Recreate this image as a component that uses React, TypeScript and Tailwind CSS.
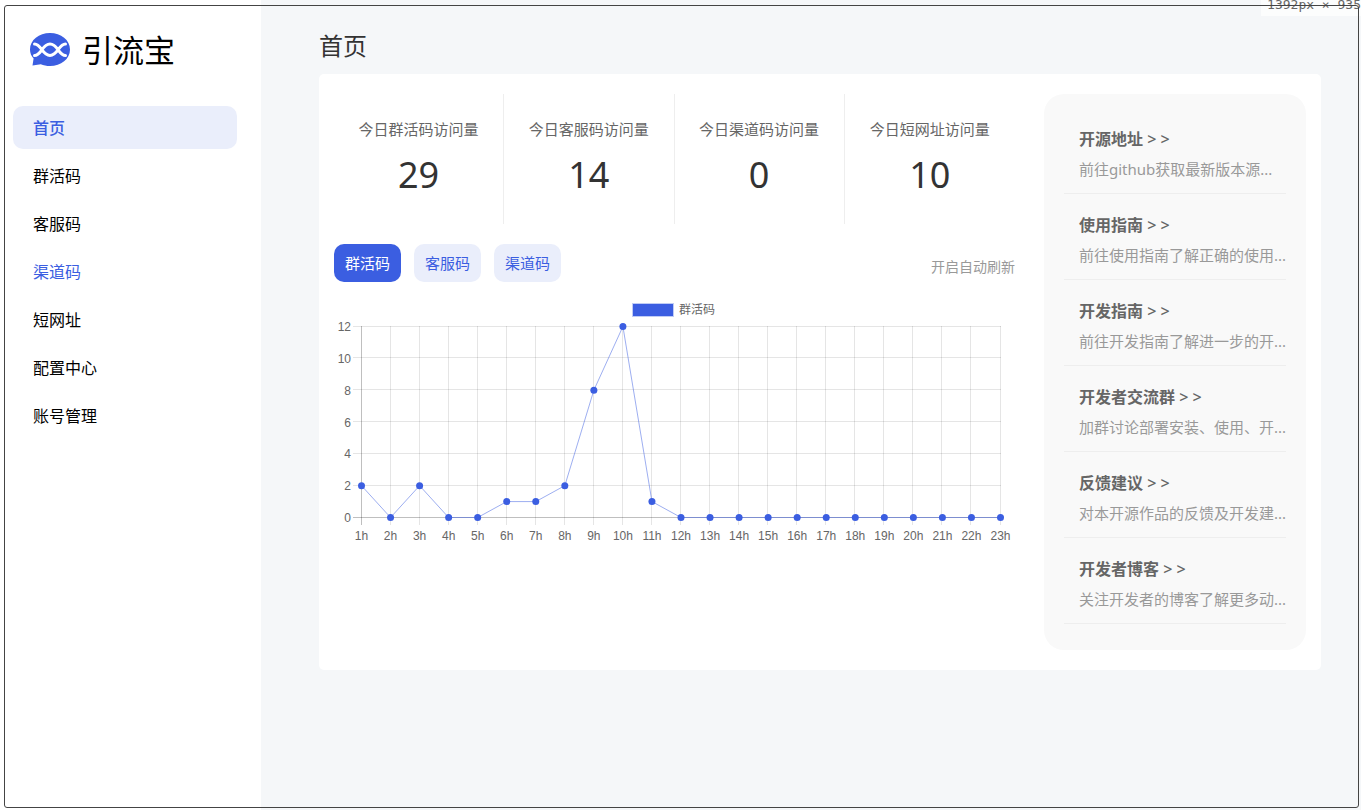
interface NavItem {
  id: string;
  title: string;
}

interface GuideLink {
  title: string;
  desc: string;
}

const navItems: NavItem[] = [
  { id: 'home', title: '首页' },
  { id: 'group', title: '群活码' },
  { id: 'service', title: '客服码' },
  { id: 'channel', title: '渠道码' },
  { id: 'short', title: '短网址' },
  { id: 'config', title: '配置中心' },
  { id: 'account', title: '账号管理' },
];

const stats = [
  { label: '今日群活码访问量', value: 29 },
  { label: '今日客服码访问量', value: 14 },
  { label: '今日渠道码访问量', value: 0 },
  { label: '今日短网址访问量', value: 10 },
];

const tabs = ['群活码', '客服码', '渠道码'];

const guideLinks: GuideLink[] = [
  { title: '开源地址', desc: '前往github获取最新版本源...' },
  { title: '使用指南', desc: '前往使用指南了解正确的使用...' },
  { title: '开发指南', desc: '前往开发指南了解进一步的开...' },
  { title: '开发者交流群', desc: '加群讨论部署安装、使用、开...' },
  { title: '反馈建议', desc: '对本开源作品的反馈及开发建...' },
  { title: '开发者博客', desc: '关注开发者的博客了解更多动...' },
];

const hourly = [2, 0, 2, 0, 0, 1, 1, 2, 8, 12, 1, 0, 0, 0, 0, 0, 0, 0, 0, 0, 0, 0, 0];

function Logo() {
  return (
    <svg className="h-[34px] w-10 shrink-0" viewBox="0 0 40 34" fill="none" aria-hidden="true">
      <path
        d="M20 0C31 0 40 7 40 16.5S31 33 20 33c-3.5 0-6.5-.6-9.2-1.8L2.5 32.5 3.6 25.5C1.3 23 0 20 0 16.5 0 7 9 0 20 0Z"
        fill="#3b5ee1"
      />
      <path
        d="M4.5 11C11.5 11 12 22.500 20 22.500S28.500 11 35.500 11M4.500 22.500C11.500 22.500 12 11 20 11S28.500 22.500 35.500 22.500"
        stroke="#fff"
        strokeWidth="3"
        strokeLinecap="round"
      />
    </svg>
  );
}

function Sidebar() {
  return (
    <aside className="w-[261px] shrink-0 bg-white pl-[13px] pr-6 pt-7">
      <div className="flex h-11 items-center gap-3 pl-[17px]">
        <Logo />
        <span className="text-[31px] leading-[44px] text-black">引流宝</span>
      </div>
      <nav className="mt-[34px] flex flex-col gap-[5px]">
        {navItems.map((item) => {
          const isActive = item.id === 'home';
          const isHovered = item.id === 'channel';
          return (
            <a
              key={item.id}
              href={`#${item.id}`}
              className={`flex h-[43px] items-center rounded-[10px] px-5 text-base hover:text-[#3b5ee1] ${
                isActive
                  ? 'bg-[#eaeefb] font-medium text-[#3b5ee1]'
                  : isHovered
                    ? 'text-[#3b5ee1]'
                    : 'text-black'
              }`}
            >
              {item.title}
            </a>
          );
        })}
      </nav>
    </aside>
  );
}

function StatsRow() {
  return (
    <div className="grid grid-cols-4">
      {stats.map((stat) => (
        <div
          key={stat.label}
          className="flex h-[130px] flex-col items-center border-r border-[#eee] pt-6 last:border-r-0"
        >
          <span className="text-[15px] leading-[22px] text-[#666]">{stat.label}</span>
          <span className="mt-2.5 text-4xl leading-[50px] text-[#333]">{stat.value}</span>
        </div>
      ))}
    </div>
  );
}

const LEFT = 27;
const RIGHT = 666;
const TOP = 26;
const BOTTOM = 217;
const MAX = 12;

const xAt = (i: number) => LEFT + (i * (RIGHT - LEFT)) / (hourly.length - 1);
const yAt = (v: number) => BOTTOM - (v * (BOTTOM - TOP)) / MAX;
const crisp = (n: number) => Math.floor(n) + 0.5;

function VisitChart() {
  const points = hourly.map((v, i) => `${xAt(i) + 0.5},${yAt(v) + 0.5}`).join(' ');

  return (
    <svg
      className="mt-[18px] block w-full font-['Liberation_Sans','Noto_Sans_CJK_SC',sans-serif] text-xs"
      viewBox="0 0 681 250"
      role="img"
      aria-label="群活码"
    >
      {/* Legend */}
      <rect x="298.5" y="3.5" width="41" height="13" fill="#3b5ee1" stroke="#c0ccf5" />
      <text x="345" y="14" fill="#666">
        群活码
      </text>

      {/* Horizontal grid */}
      {[0, 2, 4, 6, 8, 10, 12].map((v) => (
        <g key={v}>
          <line
            x1={LEFT - 8}
            x2={RIGHT + 1}
            y1={crisp(yAt(v))}
            y2={crisp(yAt(v))}
            stroke="#000"
            strokeOpacity={v === 0 ? 0.25 : 0.1}
          />
          <text x="17" y={Math.round(yAt(v)) + 5} textAnchor="end" fill="#666">
            {v}
          </text>
        </g>
      ))}

      {/* Vertical grid */}
      {hourly.map((_, i) => (
        <g key={i}>
          <line
            x1={crisp(xAt(i))}
            x2={crisp(xAt(i))}
            y1={TOP}
            y2={BOTTOM + 8}
            stroke="#000"
            strokeOpacity={i === 0 ? 0.25 : 0.1}
          />
          <text x={xAt(i) + 0.5} y="240" textAnchor="middle" fill="#666">
            {i + 1}h
          </text>
        </g>
      ))}

      <polyline points={points} fill="none" stroke="#3b5ee1" strokeOpacity="0.5" />
      {hourly.map((v, i) => (
        <circle key={i} cx={xAt(i) + 0.5} cy={yAt(v) + 0.5} r="3.5" fill="#3b5ee1" />
      ))}
    </svg>
  );
}

function GuidePanel() {
  return (
    <div className="w-[262px] shrink-0 rounded-[20px] bg-[#f9f9f9] px-5 pb-[26px] pt-3.5">
      {guideLinks.map((link) => (
        <a
          key={link.title}
          href="#guide"
          className="block h-[86px] whitespace-nowrap border-b border-[#eee] pl-[15px] pt-[18px]"
        >
          <div className="text-base leading-[26px] font-bold text-[#666]">
            {link.title} <span className="font-medium">&gt; &gt;</span>
          </div>
          <div className="mt-1 text-[15px] leading-[26px] text-[#999]">{link.desc}</div>
        </a>
      ))}
    </div>
  );
}

export default function App() {
  return (
    <div className="relative flex min-h-screen overflow-hidden bg-[#f5f7f9] font-['Noto_Sans','Noto_Sans_CJK_SC',sans-serif]">
      <Sidebar />

      <main className="min-w-0 flex-1 pb-10 pl-[58px] pr-10 pt-7">
        <h1 className="text-2xl leading-9 text-[#333]">首页</h1>

        <section className="mt-2.5 flex gap-[29px] rounded-[5px] bg-white px-[15px] py-5">
          <div className="min-w-0 flex-1">
            <StatsRow />
            <div className="mt-5 flex items-center justify-between">
              <div className="flex gap-[13px]">
                {tabs.map((tab, index) => (
                  <button
                    key={tab}
                    type="button"
                    className={`h-[38px] rounded-[10px] px-[11px] text-[15px] ${
                      index === 0 ? 'bg-[#3b5ee1] text-white' : 'bg-[#eaeefb] text-[#3b5ee1]'
                    }`}
                  >
                    {tab}
                  </button>
                ))}
              </div>
              <button type="button" className="pt-2 text-sm text-[#999]">
                开启自动刷新
              </button>
            </div>
            <VisitChart />
          </div>
          <GuidePanel />
        </section>
      </main>

      {/* Viewport outline with its size label */}
      <div className="absolute right-0 top-0 h-4 whitespace-nowrap bg-white/70 pl-1.5 font-['DejaVu_Sans_Mono',monospace] text-[13px] leading-[10px] text-[#666]">
        1392px × 935
      </div>
      <div className="pointer-events-none absolute bottom-0.5 left-1 right-0.5 top-[5px] rounded-[3px] border border-[#444]" />
    </div>
  );
}
